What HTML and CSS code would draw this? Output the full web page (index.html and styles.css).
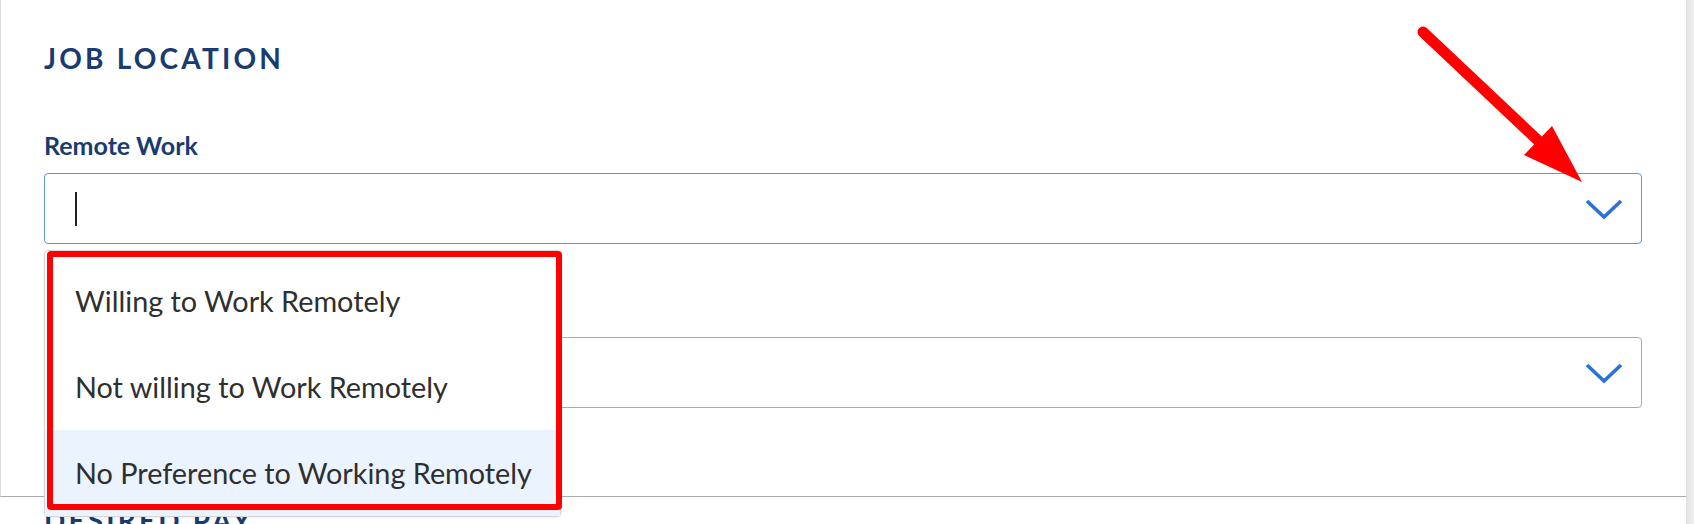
FILE: index.html
```html
<!DOCTYPE html>
<html lang="en">
<head>
<meta charset="utf-8">
<title>Job Location</title>
<link rel="stylesheet" href="styles.css">
</head>
<body>
<div class="page">
  <main class="card">
    <section class="section section-location">
      <h2 class="section-title">JOB LOCATION</h2>
      <div class="field field-first">
        <label class="field-label">Remote Work</label>
        <div class="select select-focused">
          <span class="caret"></span>
          <svg class="chevron" viewBox="0 0 40 22" width="40" height="22" aria-hidden="true"><polyline points="3,3 20,19 37,3" fill="none" stroke="#2a72d8" stroke-width="3.6" stroke-linejoin="miter"/></svg>
        </div>
        <ul class="menu">
          <li class="menu-item">Willing to Work Remotely</li>
          <li class="menu-item">Not willing to Work Remotely</li>
          <li class="menu-item menu-item-active">No Preference to Working Remotely</li>
        </ul>
      </div>
      <div class="field field-second">
        <label class="field-label" aria-label="Willing to Relocate">&nbsp;</label>
        <div class="select">
          <span class="spacer"></span>
          <svg class="chevron" viewBox="0 0 40 22" width="40" height="22" aria-hidden="true"><polyline points="3,3 20,19 37,3" fill="none" stroke="#2a72d8" stroke-width="3.6" stroke-linejoin="miter"/></svg>
        </div>
      </div>
    </section>
    <section class="section section-pay">
      <h2 class="section-title">DESIRED PAY</h2>
    </section>
  </main>
  <div class="scroll-edge"></div>
  <div class="highlight-box"></div>
  <svg class="arrow" viewBox="0 0 1694 524" width="1694" height="524" aria-hidden="true">
    <line x1="1423" y1="32" x2="1545" y2="147" stroke="#ff0000" stroke-width="11" stroke-linecap="round"/>
    <polygon points="1582,182 1552,126 1524,155" fill="#ff0000"/>
  </svg>
</div>
</body>
</html>
```
FILE: styles.css
```css
* {
  box-sizing: border-box;
}

html, body {
  margin: 0;
  padding: 0;
  background: #ffffff;
}

body {
  font-family: Lato, "Open Sans", "Liberation Sans", sans-serif;
  color: #333333;
}

.page {
  position: relative;
  width: 1694px;
  height: 524px;
  overflow: hidden;
  display: flex;
}

.card {
  flex: 1;
  display: flex;
  flex-direction: column;
}

.scroll-edge {
  width: 8px;
  background: linear-gradient(to right, #e2e2e2, #efefef);
}

.section-location {
  border-left: 1px solid #dcdcdc;
  border-bottom: 1px solid #ababab;
  padding: 42px 44px 88px 43px;
}

.section-pay {
  padding: 7px 44px 0 44px;
}

.section-title {
  margin: 0;
  font-size: 28px;
  line-height: 32px;
  font-weight: 700;
  letter-spacing: 3.2px;
  color: #183b70;
}

.field {
  position: relative;
  display: flex;
  flex-direction: column;
}

.field-first {
  margin-top: 56px;
}

.field-second {
  margin-top: 50px;
}

.field-label {
  font-size: 25px;
  line-height: 30px;
  font-weight: 700;
  color: #183b70;
  margin-bottom: 13px;
}

.select {
  height: 71px;
  border: 1px solid #aaaaaa;
  border-radius: 4px;
  display: flex;
  align-items: center;
  justify-content: space-between;
  padding: 0 17px 0 30px;
  background: #ffffff;
}

.select-focused {
  border-color: #5596e6;
}

.caret {
  width: 2px;
  height: 34px;
  background: #222222;
}

.spacer {
  width: 2px;
}

.chevron {
  display: block;
}

.menu {
  position: absolute;
  left: 0;
  top: 120px;
  width: 517px;
  margin: 0;
  padding: 7px 0 0 0;
  list-style: none;
  background: #ffffff;
  border: 1px solid #d6d6d6;
  border-radius: 4px;
  box-shadow: 0 1px 3px rgba(0, 0, 0, 0.08);
  z-index: 2;
}

.menu-item {
  height: 86px;
  display: flex;
  align-items: center;
  padding-left: 30px;
  font-size: 28.8px;
  line-height: 34px;
  color: #2f2f2f;
}

.menu-item-active {
  background: #ebf3fe;
}

.highlight-box {
  position: absolute;
  left: 47px;
  top: 251px;
  width: 515px;
  height: 259px;
  border: 6px solid #ff0000;
  border-radius: 4px;
  z-index: 3;
  pointer-events: none;
}

.arrow {
  position: absolute;
  left: 0;
  top: 0;
  z-index: 4;
  pointer-events: none;
}
```
